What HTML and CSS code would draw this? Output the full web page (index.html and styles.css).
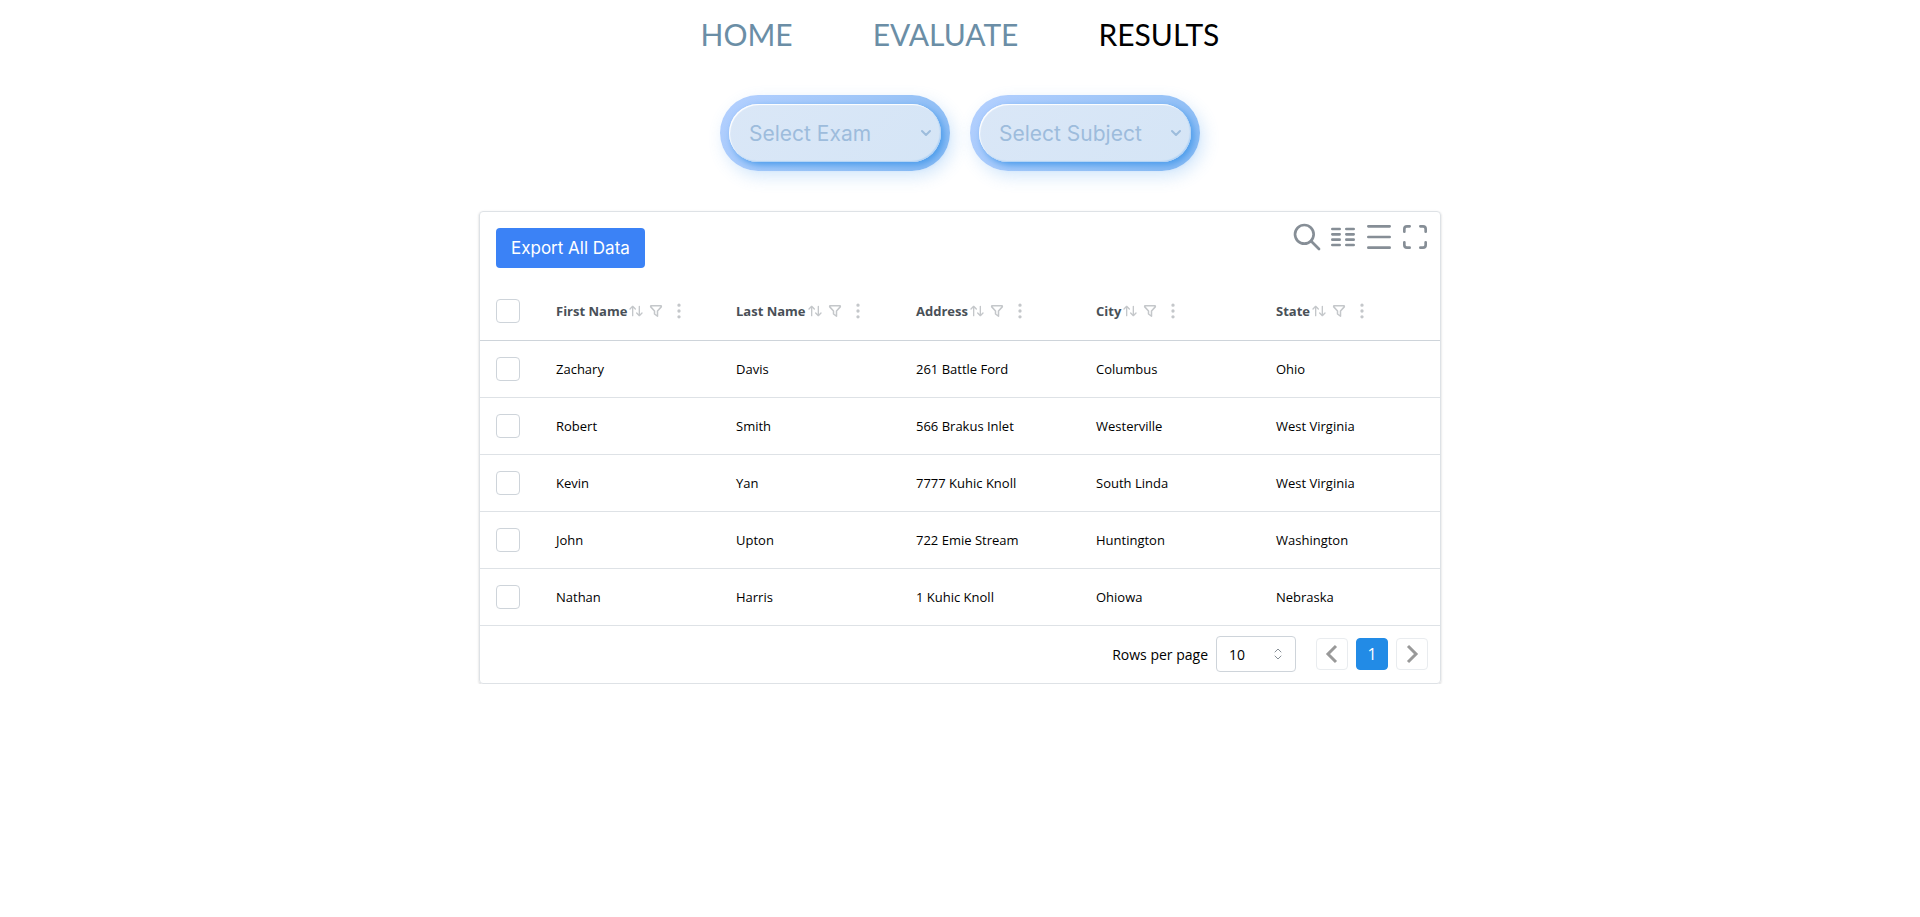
FILE: index.html
```html
<!DOCTYPE html>
<html lang="en">
<head>
<meta charset="utf-8">
<title>Results</title>
<link rel="stylesheet" href="styles.css">
</head>
<body>
<svg class="sprite" aria-hidden="true">
  <symbol id="sort" viewBox="0 0 24 24"><path d="M3 9l4-4 4 4M7 5v14M21 15l-4 4-4-4M17 19V5"/></symbol>
  <symbol id="filter" viewBox="0 0 24 24"><path d="M5.5 5h13a1 1 0 0 1 .5 1.500L14 12v7l-4-3v-4L5 6.500a1 1 0 0 1 .5-1.500"/></symbol>
  <symbol id="dots" viewBox="0 0 24 24"><circle cx="12" cy="12" r="1"/><circle cx="12" cy="19" r="1"/><circle cx="12" cy="5" r="1"/></symbol>
</svg>
<nav class="nav">
  <a class="nav-link" href="#home">HOME</a>
  <a class="nav-link" href="#evaluate">EVALUATE</a>
  <a class="nav-link active" href="#results" aria-current="page">RESULTS</a>
</nav>
<main>
  <div class="pickers">
    <div class="picker">
      <select class="picker-select" aria-label="Exam"><option>Select Exam</option></select>
      <svg class="picker-arrow" viewBox="0 0 10 10"><path d="M1 3l4 4 4-4"/></svg>
    </div>
    <div class="picker">
      <select class="picker-select" aria-label="Subject"><option>Select Subject</option></select>
      <svg class="picker-arrow" viewBox="0 0 10 10"><path d="M1 3l4 4 4-4"/></svg>
    </div>
  </div>
  <section class="card">
    <div class="toolbar">
      <button class="export" type="button">Export All Data</button>
      <div class="tools">
        <button class="tool" type="button" aria-label="Search"><svg viewBox="0 0 24 24"><circle cx="10" cy="10" r="7"/><path d="M21 21l-6-6"/></svg></button>
        <button class="tool" type="button" aria-label="Columns"><svg viewBox="0 0 24 24"><path d="M4 6h5.500M4 10h5.500M4 14h5.500M4 18h5.500M14.500 6H20M14.500 10H20M14.500 14H20M14.500 18H20"/></svg></button>
        <button class="tool" type="button" aria-label="Density"><svg viewBox="0 0 24 24"><path d="M4 4h16M4 12h16M4 20h16"/></svg></button>
        <button class="tool" type="button" aria-label="Full screen"><svg viewBox="0 0 24 24"><path d="M4 8V6a2 2 0 0 1 2-2h2M4 16v2a2 2 0 0 0 2 2h2M16 4h2a2 2 0 0 1 2 2v2M16 20h2a2 2 0 0 0 2-2v-2"/></svg></button>
      </div>
    </div>
    <table class="grid">
      <thead>
        <tr>
          <th class="pick"><input class="check" type="checkbox" aria-label="Select all"></th>
          <th><div class="head">First Name<svg class="sort"><use href="#sort"/></svg><svg class="filter"><use href="#filter"/></svg><svg class="dots"><use href="#dots"/></svg></div></th>
          <th><div class="head">Last Name<svg class="sort"><use href="#sort"/></svg><svg class="filter"><use href="#filter"/></svg><svg class="dots"><use href="#dots"/></svg></div></th>
          <th><div class="head">Address<svg class="sort"><use href="#sort"/></svg><svg class="filter"><use href="#filter"/></svg><svg class="dots"><use href="#dots"/></svg></div></th>
          <th><div class="head">City<svg class="sort"><use href="#sort"/></svg><svg class="filter"><use href="#filter"/></svg><svg class="dots"><use href="#dots"/></svg></div></th>
          <th><div class="head">State<svg class="sort"><use href="#sort"/></svg><svg class="filter"><use href="#filter"/></svg><svg class="dots"><use href="#dots"/></svg></div></th>
        </tr>
      </thead>
      <tbody>
        <tr><td class="pick"><input class="check" type="checkbox" aria-label="Select Zachary"></td><td>Zachary</td><td>Davis</td><td>261 Battle Ford</td><td>Columbus</td><td>Ohio</td></tr>
        <tr><td class="pick"><input class="check" type="checkbox" aria-label="Select Robert"></td><td>Robert</td><td>Smith</td><td>566 Brakus Inlet</td><td>Westerville</td><td>West Virginia</td></tr>
        <tr><td class="pick"><input class="check" type="checkbox" aria-label="Select Kevin"></td><td>Kevin</td><td>Yan</td><td>7777 Kuhic Knoll</td><td>South Linda</td><td>West Virginia</td></tr>
        <tr><td class="pick"><input class="check" type="checkbox" aria-label="Select John"></td><td>John</td><td>Upton</td><td>722 Emie Stream</td><td>Huntington</td><td>Washington</td></tr>
        <tr><td class="pick"><input class="check" type="checkbox" aria-label="Select Nathan"></td><td>Nathan</td><td>Harris</td><td>1 Kuhic Knoll</td><td>Ohiowa</td><td>Nebraska</td></tr>
      </tbody>
    </table>
    <div class="footer">
      <label class="rows-label" for="rows">Rows per page</label>
      <div class="rows">
        <select class="rows-select" id="rows"><option>10</option></select>
        <svg class="rows-arrow" viewBox="0 0 14 14"><path d="M4 5l3-3 3 3M4 9l3 3 3-3"/></svg>
      </div>
      <div class="pages">
        <button class="page" type="button" aria-label="Previous page"><svg viewBox="0 0 20 20"><path d="M14 2L6 10l8 8"/></svg></button>
        <button class="page current" type="button">1</button>
        <button class="page" type="button" aria-label="Next page"><svg viewBox="0 0 20 20"><path d="M6 2l8 8-8 8"/></svg></button>
      </div>
    </div>
  </section>
</main>
</body>
</html>
```
FILE: styles.css
```css
* { box-sizing: border-box; }
body {
  margin: 0;
  background: #fff;
  color: #000;
  font-family: "Open Sans", "Noto Sans", sans-serif;
  font-size: 14px;
}
svg { fill: none; stroke: currentColor; stroke-linecap: round; stroke-linejoin: round; stroke-width: 2; display: block; flex: none; }
button, select, input { font: inherit; color: inherit; margin: 0; }
.sprite { display: none; }

.nav { display: flex; justify-content: center; gap: 80px; padding-top: 14px; }
.nav-link {
  font-family: Lato, sans-serif;
  font-size: 30px;
  line-height: 40px;
  color: #6b8ea6;
  text-decoration: none;
}
.nav-link.active { color: #000; }

.pickers { display: flex; justify-content: center; gap: 20px; padding: 41px 0 40px; }
.picker {
  position: relative;
  width: 230px;
  padding: 9px;
  border-radius: 38px;
  background: linear-gradient(135deg, #b4d0ff 0%, #9fc6f8 50%, #85b9f3 100%);
  box-shadow: 4px 6px 16px rgba(80, 160, 240, .24);
}
.picker-select {
  appearance: none;
  display: block;
  width: 100%;
  height: 58px;
  padding: 0 20px;
  border: 0;
  border-radius: 29px;
  background: linear-gradient(135deg, #dae7f7, #d5e5f6);
  box-shadow: inset 1px 1px 1px #fff, inset -1px -1px 1px #b2d3f5, 3px 3px 7px #4b9ceb;
  color: #9dbcdc;
  font-family: Inter, sans-serif;
  font-size: 21px;
}
.picker-arrow { position: absolute; right: 19px; top: 33px; width: 10px; height: 10px; color: #9dbcdc; pointer-events: none; }

.card {
  width: 962px;
  max-width: 100%;
  margin: 0 auto;
  border: 1px solid #dee2e6;
  border-radius: 4px;
  box-shadow: 0 1px 3px rgba(0, 0, 0, .1), 0 1px 2px rgba(0, 0, 0, .1);
}
.toolbar { display: flex; justify-content: space-between; align-items: flex-start; padding: 16px 9px 15px 16px; }
.export {
  height: 40px;
  padding: 0 15px;
  border: 0;
  border-radius: 4px;
  background: #3b82f6;
  color: #fff;
  font-family: Inter, sans-serif;
  font-size: 17px;
}
.tools { display: flex; gap: 4px; margin-top: -7px; }
.tool { padding: 0; border: 0; background: none; color: #868e96; }
.tool svg { width: 32px; height: 32px; }

.grid { width: 100%; border-collapse: collapse; table-layout: fixed; font-size: 13px; }
.grid th, .grid td { height: 57px; padding: 0 16px; text-align: left; border-bottom: 1px solid #dee2e6; }
.grid th { border-bottom-color: #ced4da; color: #495057; font-weight: 700; }
.grid .pick { width: 60px; }
.head { display: flex; align-items: center; white-space: nowrap; }
.head svg { color: #c4c7ca; }
.sort { width: 16px; height: 16px; margin-left: 1px; }
.filter { width: 18px; height: 18px; margin-left: 3px; }
.dots { width: 20px; height: 20px; margin-left: 4px; }
.check { appearance: none; display: block; width: 24px; height: 24px; border: 1px solid #ced4da; border-radius: 4px; background: #fff; }

.footer { display: flex; justify-content: flex-end; align-items: center; height: 57px; padding-right: 12px; }
.rows-label { font-weight: 500; margin-right: 8px; }
.rows { position: relative; width: 80px; margin-right: 20px; }
.rows-select { appearance: none; display: block; width: 100%; height: 36px; padding: 0 12px; border: 1px solid #ced4da; border-radius: 4px; background: #fff; }
.rows-arrow { position: absolute; right: 11px; top: 11px; width: 14px; height: 14px; stroke-width: 1; color: #868e96; pointer-events: none; }
.pages { display: flex; gap: 8px; }
.page { display: grid; place-items: center; width: 32px; height: 32px; padding: 0; border: 1px solid #e9ecef; border-radius: 4px; background: #fff; color: #999; font-size: 16px; }
.page svg { width: 20px; height: 20px; stroke-linecap: butt; stroke-linejoin: miter; stroke-width: 3; }
.page.current { border-color: #228be6; background: #228be6; color: #fff; }
```
